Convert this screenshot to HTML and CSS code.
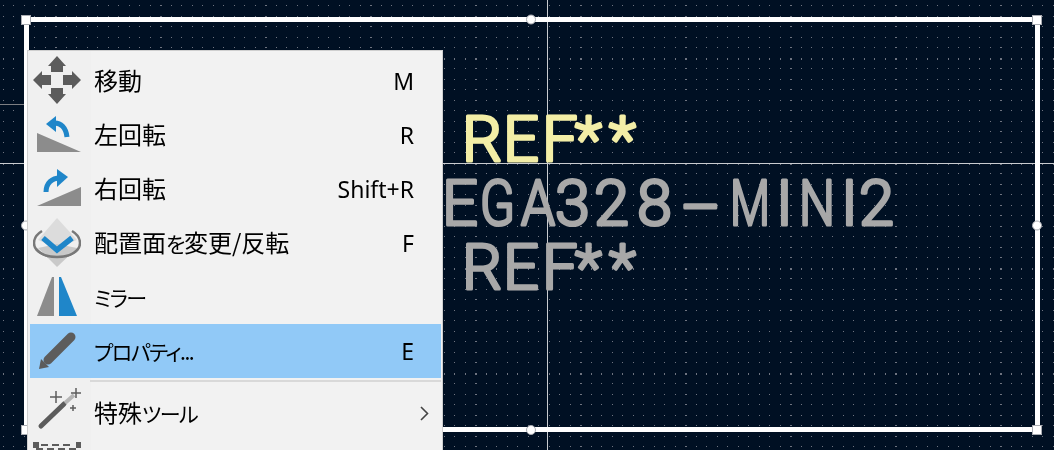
FILE: index.html
```html
<!DOCTYPE html>
<html lang="ja">
<head>
    <meta charset="UTF-8">
    <meta name="viewport" content="width=device-width, initial-scale=1.0">
    <title>Footprint Editor</title>
    <link rel="stylesheet" href="styles.css">
</head>
<body>
    <div class="board">
        <canvas id="grid" class="grid" width="1054" height="450"></canvas>
        <svg class="overlay" width="1054" height="450" viewBox="0 0 1054 450">
            <line class="cross" x1="547.5" y1="0" x2="547.5" y2="450"/>
            <line class="cross" x1="0" y1="163.5" x2="1054" y2="163.5"/>
            <line class="cross-dim" x1="0" y1="104.5" x2="27" y2="104.5"/>
            <line class="cross-dim" x1="26.5" y1="64" x2="26.5" y2="143"/>

            <text class="silk ref-value" y="161" x="462 503 542 575 609">REF**</text>
            <text class="silk ref-gray" y="225"><tspan x="370">M</tspan><tspan x="442">E</tspan><tspan x="480" textLength="35" lengthAdjust="spacingAndGlyphs">G</tspan><tspan x="521" textLength="34" lengthAdjust="spacingAndGlyphs">A</tspan><tspan x="555">3</tspan><tspan x="594">2</tspan><tspan x="637">8</tspan><tspan x="680" y="229">–</tspan><tspan x="730" y="225" textLength="40" lengthAdjust="spacingAndGlyphs">M</tspan><tspan x="776">I</tspan><tspan x="799" textLength="36" lengthAdjust="spacingAndGlyphs">N</tspan><tspan x="841">I</tspan><tspan x="859">2</tspan></text>
            <text class="silk ref-gray" y="289" x="462 503 542 575 609">REF**</text>

            <rect class="outline" x="26.5" y="19.5" width="1011" height="410"/>
            <rect class="handle" x="21.5" y="15.5" width="9" height="9"/>
            <rect class="handle" x="1032.5" y="15.5" width="9" height="9"/>
            <rect class="handle" x="21.5" y="425.5" width="9" height="9"/>
            <rect class="handle" x="1032.5" y="425.5" width="9" height="9"/>
            <circle class="handle" cx="531" cy="19.5" r="4.5"/>
            <circle class="handle" cx="531" cy="430" r="4.5"/>
            <circle class="handle" cx="26" cy="225.5" r="4.5"/>
            <circle class="handle" cx="1037" cy="225.5" r="4.5"/>
        </svg>

        <div class="menu">
            <div class="menu-item">
                <svg class="icon" viewBox="0 0 48 54">
                    <path class="ic-dark" d="M24 2 33 12H30V18H18V12H15ZM24 50 15 40H18V34H30V40H33ZM0 26 9 17V21H18V31H9V35ZM48 26 39 35V31H30V21H39V17Z"/>
                </svg>
                <span class="label">移動</span>
                <span class="key">M</span>
            </div>
            <div class="menu-item">
                <svg class="icon" viewBox="0 0 48 54">
                    <path class="ic-gray" d="M4 25 48 44H4Z"/>
                    <path class="ic-line" d="M20 15C28 14 33 20 34 29"/>
                    <path class="ic-blue" d="M13 16 23 8V24Z"/>
                </svg>
                <span class="label">左回転</span>
                <span class="key">R</span>
            </div>
            <div class="menu-item">
                <svg class="icon" viewBox="0 0 48 54">
                    <path class="ic-gray" d="M48 25V44H4Z"/>
                    <path class="ic-line" d="M13 30C13 21 19 16 27 16"/>
                    <path class="ic-blue" d="M35 15 24 7V25Z"/>
                </svg>
                <span class="label">右回転</span>
                <span class="key">Shift+R</span>
            </div>
            <div class="menu-item">
                <svg class="icon" viewBox="0 0 48 54">
                    <path class="ic-ring" d="M9 15C4 18 1 23 1 27 1 35 11 41 24 41 37 41 47 35 47 27 47 23 44 18 39 15"/>
                    <path class="ic-pale" d="M24 2 44 24 24 32 5 24Z"/>
                    <path class="ic-mid" d="M5 32 24 28 44 32 24 51Z"/>
                    <path class="ic-ring" d="M3 33C7 38 14 41 24 41 34 41 41 38 45 33"/>
                    <path class="ic-chevron" d="M10 22 24 34 39 22"/>
                </svg>
                <span class="label">配置面<span class="kana">を</span>変更/反転</span>
                <span class="key">F</span>
            </div>
            <div class="menu-item">
                <svg class="icon" viewBox="0 0 48 54">
                    <path class="ic-gray" d="M19 7H21V46H4Z"/>
                    <path class="ic-blue" d="M26 7H28L44 46H26Z"/>
                </svg>
                <span class="label"><span class="kana">ミラー</span></span>
            </div>
            <div class="menu-item is-active">
                <svg class="icon" viewBox="0 0 48 54">
                    <path class="ic-pencil" d="M38 13 15 36"/>
                    <path class="ic-dark" d="M6 45 8 35 16 43Z"/>
                </svg>
                <span class="label"><span class="kana">プロパティ...</span></span>
                <span class="key">E</span>
            </div>
            <div class="menu-sep"></div>
            <div class="menu-item">
                <svg class="icon" viewBox="0 0 48 54">
                    <path class="ic-wand" d="M8 40 31 18"/>
                    <path class="ic-wand-tip" d="M32 17 41 9"/>
                    <path class="ic-spark" d="M23 5V17M17 11H29M43 2V12M38 7H48M40 19V25M37 22H43"/>
                </svg>
                <span class="label">特殊<span class="kana">ツール</span></span>
                <svg class="chevron" width="9" height="15" viewBox="0 0 9 15"><path d="M1 1 7.5 7.5 1 14"/></svg>
            </div>
            <div class="menu-item">
                <svg class="icon" viewBox="0 0 48 54">
                    <path class="ic-dark" d="M0 2H6V8H0ZM43 2H48V8H43Z"/>
                    <path class="ic-dash" d="M8 5H41M3 9H45"/>
                </svg>
            </div>
        </div>
    </div>
    <script src="grid.js"></script>
</body>
</html>
```

FILE: styles.css
```css
html, body {
    margin: 0;
    padding: 0;
    height: 100%;
    overflow: hidden;
    background: #001023;
}

.board {
    position: relative;
    width: 1054px;
    height: 450px;
    overflow: hidden;
    background: #001023;
}

.grid, .overlay {
    position: absolute;
    left: 0;
    top: 0;
}

/* canvas drawing */
.cross {
    stroke: #c9ccd0;
    stroke-width: 1;
}

.cross-dim {
    stroke: #7d7f83;
    stroke-width: 1;
}

.outline {
    fill: none;
    stroke: #fff;
    stroke-width: 5;
}

.handle {
    fill: #fff;
    stroke: #a9acb2;
    stroke-width: 1;
}

.silk {
    font-family: "Roboto", sans-serif;
    font-size: 63px;
    font-weight: 300;
    stroke-width: 3.2;
    stroke-linejoin: round;
    stroke-linecap: round;
}

.ref-value {
    fill: #f3eea6;
    stroke: #f3eea6;
}

.ref-gray {
    fill: #a8a8a8;
    stroke: #a8a8a8;
}

/* context menu */
.menu {
    position: absolute;
    left: 27px;
    top: 50px;
    width: 416px;
    box-sizing: border-box;
    padding: 3px 1px 0 2px;
    background: linear-gradient(to right, #f0f0f0 63px, #f2f2f2 63px);
    border: 1px solid #cfcfcf;
    border-bottom: none;
    font-family: "Noto Sans CJK JP", "Noto Sans", sans-serif;
    font-size: 24px;
    font-feature-settings: "palt";
    color: #000;
}

.menu-item {
    display: flex;
    align-items: center;
    height: 54px;
}

.menu-item.is-active {
    background: #91c9f7;
}

.icon {
    flex: none;
    width: 48px;
    height: 54px;
    margin: 0 13px 0 3px;
}

.label {
    flex: 1;
    padding-bottom: 3px;
    white-space: nowrap;
}

.kana {
    font-size: 21px;
    letter-spacing: -1.5px;
}

.key {
    margin-right: 27px;
    padding-bottom: 1px;
    font-family: "Noto Sans", sans-serif;
    font-size: 23px;
    font-feature-settings: normal;
}

.chevron {
    margin-right: 12px;
    fill: none;
    stroke: #444;
    stroke-width: 1.6;
}

.menu-sep {
    height: 2px;
    margin: 2px 0 4px 60px;
    background: #d9d9d9;
}

/* icon paints */
.ic-dark { fill: #5c5c5c; }
.ic-gray { fill: #8c8c8c; }
.ic-blue { fill: #1f86c9; }
.ic-pale { fill: #dcdcdc; }
.ic-mid { fill: #c9c9c9; }

.ic-line {
    fill: none;
    stroke: #1f86c9;
    stroke-width: 5;
}

.ic-ring {
    fill: none;
    stroke: #787878;
    stroke-width: 2.5;
}

.ic-chevron {
    fill: none;
    stroke: #1f86c9;
    stroke-width: 5.5;
}

.ic-pencil {
    fill: none;
    stroke: #5c5c5c;
    stroke-width: 9;
    stroke-linecap: round;
}

.ic-wand {
    fill: none;
    stroke: #5c5c5c;
    stroke-width: 5;
    stroke-linecap: round;
}

.ic-wand-tip {
    fill: none;
    stroke: #b5b5b5;
    stroke-width: 4;
}

.ic-spark {
    fill: none;
    stroke: #5c5c5c;
    stroke-width: 1.5;
}

.ic-dash {
    fill: none;
    stroke: #5c5c5c;
    stroke-width: 2;
    stroke-dasharray: 7 4;
}
```

FILE: grid.js
```js
// grid dots: 10.5px pitch, every 10th one is drawn a bit longer
const ctx = document.getElementById('grid').getContext('2d');
const pitch = 10.5;
const startX = 2.7;
const startY = 5.2;

ctx.fillStyle = '#6f7480';
for (let i = 0; i < 101; i++) {
    for (let j = 0; j < 43; j++) {
        const x = Math.round(startX + i * pitch);
        const y = Math.round(startY + j * pitch);
        const majorX = i % 10 === 5;
        const majorY = j % 10 === 5;
        ctx.fillRect(x, y, majorX ? 2 : 1, majorY ? 2 : 1);
    }
}
```
